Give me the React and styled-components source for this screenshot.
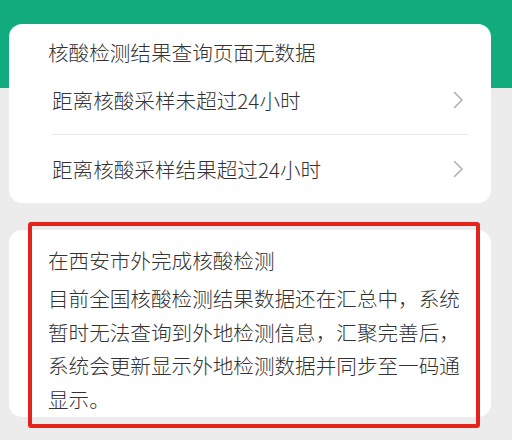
import React from "react";
import styled, { createGlobalStyle } from "styled-components";

const Global = createGlobalStyle`
  html, body { margin: 0; padding: 0; }
  body {
    background: #ececec;
    font-family: "Noto Sans CJK SC", "Noto Sans", sans-serif;
    color: #333;
  }
`;

const Page = styled.div`
  width: 512px;
  height: 440px;
  overflow: hidden;
  box-sizing: border-box;
  padding: 24px 21px 0 9px;
  background: linear-gradient(to bottom, #12ab7e 0, #12ab7e 88px, #ececec 88px);
  display: flex;
  flex-direction: column;
  gap: 27px;
`;

const Card = styled.div`
  position: relative;
  background: #fff;
  border-radius: 13px;
  box-sizing: border-box;
  padding: ${(p) => p.$pad};
`;

const Title = styled.div`
  font-size: 20.6px;
  font-weight: 300;
  line-height: ${(p) => p.$lh || "28px"};
  padding-left: 39px;
  color: #333;
  white-space: nowrap;
`;

const Row = styled.div`
  height: 68px;
  margin: 0 23px 0 43px;
  display: flex;
  align-items: center;
  justify-content: space-between;
  border-top: ${(p) => (p.$divider ? "1px solid #e8e8e8" : "none")};
  font-size: 20.6px;
  font-weight: 300;
  color: #333;
`;

const Chevron = styled.svg`
  width: 11px;
  height: 18px;
  margin-right: 4px;
  flex: none;
`;

const Para = styled.p`
  margin: 5px 0 0 39px;
  width: 420px;
  font-size: 20.6px;
  font-weight: 300;
  line-height: 33.7px;
  color: #333;
`;

const Highlight = styled.div`
  position: absolute;
  left: 19px;
  top: -8px;
  width: 452px;
  height: 206px;
  box-sizing: border-box;
  border: 4px solid #e5231d;
  border-radius: 3px;
  pointer-events: none;
`;

const Arrow = () => (
  <Chevron viewBox="0 0 11 18">
    <path d="M1.5 1.5 L9 9 L1.5 16.5" fill="none" stroke="#b0b0b0" strokeWidth="1.6" strokeLinecap="round" strokeLinejoin="round" />
  </Chevron>
);

export default function App() {
  return (
    <>
      <Global />
      <Page>
        <Card $pad="14px 0 0 0">
          <Title>核酸检测结果查询页面无数据</Title>
          <Row>
            <span>距离核酸采样未超过24小时</span>
            <Arrow />
          </Row>
          <Row $divider>
            <span>距离核酸采样结果超过24小时</span>
            <Arrow />
          </Row>
        </Card>
        <Card $pad="13px 0 0 0">
          <Title $lh="34px">在西安市外完成核酸检测</Title>
          <Para>
            目前全国核酸检测结果数据还在汇总中，系统暂时无法查询到外地检测信息，汇聚完善后，系统会更新显示外地检测数据并同步至一码通显示。
          </Para>
          <Highlight />
        </Card>
      </Page>
    </>
  );
}
